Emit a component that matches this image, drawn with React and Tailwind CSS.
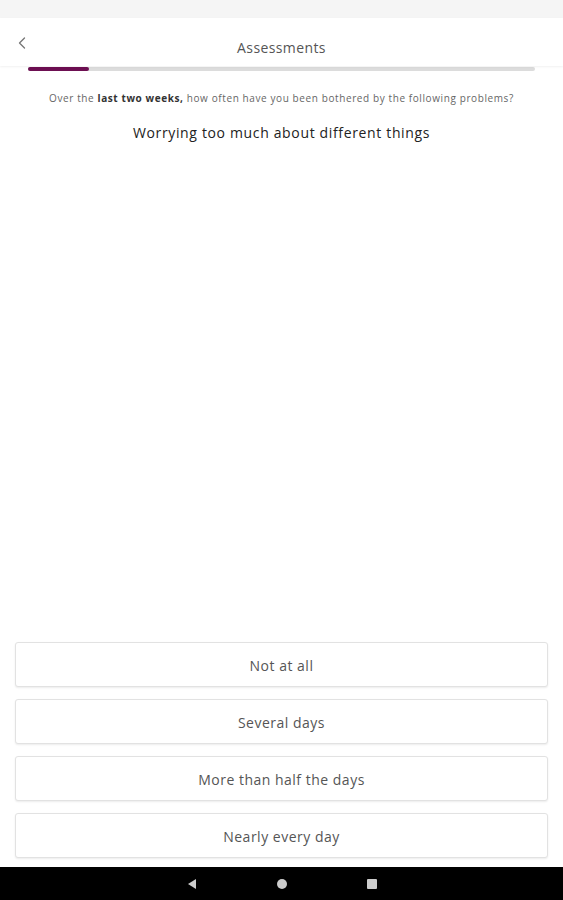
import { ChevronLeft } from 'lucide-react'

const options = ['Not at all', 'Several days', 'More than half the days', 'Nearly every day']

export default function App() {
  return (
    <div className="flex h-[900px] flex-col bg-white" style={{ fontFamily: '"Open Sans", "Noto Sans", sans-serif' }}>
      <div className="h-[18px] shrink-0 bg-[#f5f5f5]" />

      <div className="relative flex h-[48px] shrink-0 items-center justify-center shadow-[0_1px_2px_rgba(0,0,0,0.06)]">
        <button className="absolute left-[12px] top-[15px] text-[#777]">
          <ChevronLeft size={20} strokeWidth={1.6} />
        </button>
        <h1 className="mt-[10px] text-[14px] tracking-[0.4px] text-[#555]">Assessments</h1>
      </div>

      <div className="mx-[28px] mt-[1px] h-[4px] shrink-0 rounded-full bg-[#dcdcdc]">
        <div className="h-full w-[61px] rounded-full bg-[#6d0f52]" />
      </div>

      <p className="mt-[20px] text-center text-[10px] tracking-[0.6px] text-[#666]">
        Over the <span className="font-bold text-[#333]">last two weeks,</span> how often have you been bothered by the following problems?
      </p>
      <h2 className="mt-[16px] text-center text-[14px] font-medium tracking-[0.65px] text-[#222]">
        Worrying too much about different things
      </h2>

      <div className="flex-1" />

      <div className="flex flex-col gap-[12px] px-[15px] pb-[9px]">
        {options.map(o => (
          <button key={o} className="h-[45px] rounded-[3px] border border-[#e2e2e2] bg-white pt-[2px] text-[14px] tracking-[0.5px] text-[#555] shadow-[0_1px_2px_rgba(0,0,0,0.08)]">
            {o}
          </button>
        ))}
      </div>

      <div className="flex h-[33px] shrink-0 items-center justify-center gap-[80px] bg-black">
        <svg width="10" height="12" viewBox="0 0 10 12"><path d="M9 1 L1 6 L9 11 Z" fill="#ccc" /></svg>
        <span className="h-[10px] w-[10px] rounded-full bg-[#ccc]" />
        <span className="h-[10px] w-[10px] rounded-[1px] bg-[#ccc]" />
      </div>
    </div>
  )
}
